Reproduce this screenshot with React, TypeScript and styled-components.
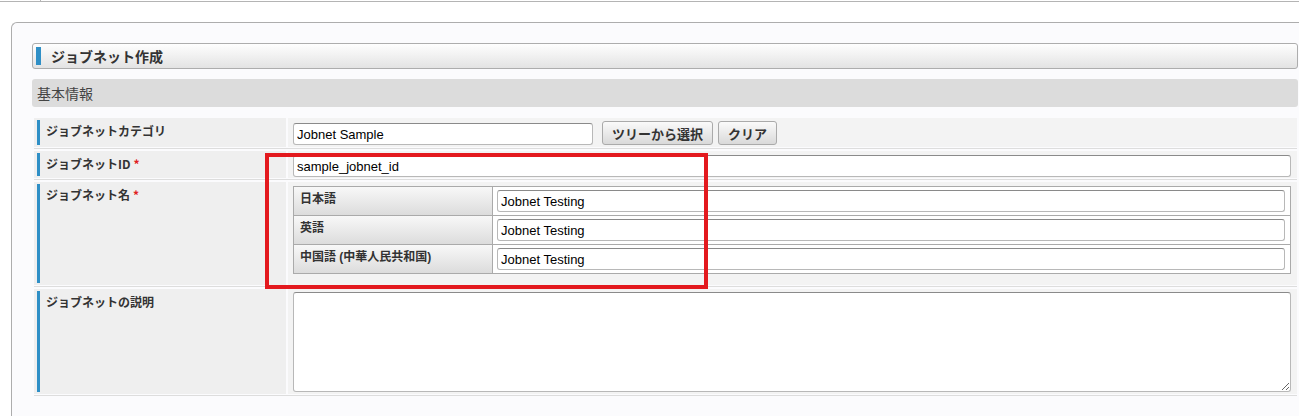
import React from "react";
import styled, { createGlobalStyle } from "styled-components";

const Global = createGlobalStyle`
  html, body { margin: 0; padding: 0; background: #ffffff; overflow: hidden; }
  body { font-family: "Liberation Sans", "Noto Sans CJK JP", sans-serif; color: #333; }
  * { box-sizing: border-box; }
`;

const Page = styled.div`
  position: relative;
  width: 1299px;
  height: 416px;
  overflow: hidden;
`;

const TopStrip = styled.div`
  height: 2px;
  border-bottom: 1px solid #b4b4b4;
`;

const TopTick = styled.div`
  margin-left: 40px;
  width: 1px;
  height: 1px;
  background: #b4b4b4;
`;

const Panel = styled.div`
  margin: 20px -30px 0 11px;
  border: 1px solid #adadad;
  border-right: none;
  border-bottom: none;
  border-radius: 6px 0 0 0;
  background: #fbfbfd;
  padding: 20px 30px 0 20px;
  height: 394px;
`;

const TitleBar = styled.div`
  display: flex;
  align-items: center;
  height: 26px;
  border: 1px solid #adadad;
  border-radius: 3px;
  background: linear-gradient(#fefefe, #e3e3e3);
  margin-right: 1px;
  &::before {
    content: "";
    display: block;
    width: 5px;
    height: 18px;
    margin-left: 3px;
    margin-right: 10px;
    background: #2f8fc6;
  }
`;

const TitleText = styled.span`
  font-family: "Noto Sans CJK JP", sans-serif;
  font-weight: 700;
  font-size: 14px;
  color: #333;
`;

const SectionHeader = styled.div`
  margin-top: 10px;
  margin-right: 1px;
  height: 28px;
  display: flex;
  align-items: center;
  padding-left: 5px;
  background: #dcdcdc;
  border-radius: 3px;
  font-family: "Noto Sans CJK JP", sans-serif;
  font-size: 14px;
  color: #444;
`;

const Form = styled.div`
  margin-top: 11px;
  margin-left: 2px;
  margin-right: 2px;
`;

const Row = styled.div`
  display: grid;
  grid-template-columns: 252px 1fr;
  column-gap: 2px;
  padding-bottom: 1px;
  border-bottom: 1px solid #dddddd;
  margin-bottom: 2px;
`;

const LabelCell = styled.div`
  background: #efefef;
  padding: 2px 0 2px 3px;
  display: flex;
`;

const LabelInner = styled.div`
  flex: 1;
  border-left: 3px solid #2f8fc6;
  padding: 4px 0 0 6px;
  font-family: "Noto Sans CJK JP", sans-serif;
  font-weight: 700;
  font-size: 12px;
  line-height: 14px;
  color: #333;
`;

const Required = styled.span`
  color: #e02020;
  margin-left: 3px;
`;

const ValueCell = styled.div<{ $pt: number; $pb: number }>`
  background: #f3f3f3;
  padding: ${(p) => p.$pt}px 6px ${(p) => p.$pb}px 5px;
  display: flex;
  align-items: flex-end;
  gap: 5px;
`;

const TextInput = styled.input<{ $w?: number }>`
  height: 22px;
  width: ${(p) => (p.$w ? `${p.$w}px` : "100%")};
  flex: ${(p) => (p.$w ? "none" : "1")};
  border: 1px solid #b8b8b8;
  border-top-color: #8a8a8a;
  border-radius: 3px;
  background: #fff;
  padding: 0 3px;
  font-family: "Liberation Sans", Arial, sans-serif;
  font-size: 13px;
  color: #000;
  outline: none;
`;

const Button = styled.button<{ $ml?: number }>`
  height: 24px;
  margin-left: ${(p) => p.$ml ?? 0}px;
  padding: 0 9px;
  border: 1px solid #aaaaaa;
  border-radius: 3px;
  background: linear-gradient(#fafafa, #d9d9d9);
  font-family: "Noto Sans CJK JP", sans-serif;
  font-weight: 700;
  font-size: 13px;
  color: #333;
`;

const SubTable = styled.div`
  flex: 1;
  border: 1px solid #aaaaaa;
  border-bottom: none;
  background: #fff;
`;

const SubRow = styled.div`
  display: grid;
  grid-template-columns: 199px 1fr;
  border-bottom: 1px solid #aaaaaa;
  height: 29px;
`;

const SubLabel = styled.div`
  border-right: 1px solid #aaaaaa;
  background: linear-gradient(#f8f8f8, #dcdcdc);
  padding: 5px 0 0 6px;
  font-family: "Liberation Sans", "Noto Sans CJK JP", sans-serif;
  font-weight: 700;
  font-size: 12px;
  line-height: 14px;
  color: #333;
`;

const SubValue = styled.div`
  padding: 3px 5px 0 4px;
  display: flex;
`;

const TextArea = styled.textarea`
  flex: 1;
  height: 100px;
  border: 1px solid #b8b8b8;
  border-top-color: #8a8a8a;
  border-radius: 3px;
  background: #fff;
  resize: both;
  outline: none;
`;

const Annotation = styled.div`
  position: absolute;
  left: 265px;
  top: 153px;
  width: 443px;
  height: 136px;
  border: 4px solid #e3191e;
  pointer-events: none;
`;

const languages = ["日本語", "英語", "中国語 (中華人民共和国)"];

export default function App() {
  return (
    <Page>
      <Global />
      <TopStrip>
        <TopTick />
      </TopStrip>
      <Panel>
        <TitleBar>
          <TitleText>ジョブネット作成</TitleText>
        </TitleBar>
        <SectionHeader>基本情報</SectionHeader>
        <Form>
          <Row>
            <LabelCell>
              <LabelInner>ジョブネットカテゴリ</LabelInner>
            </LabelCell>
            <ValueCell $pt={3} $pb={2}>
              <TextInput $w={300} defaultValue="Jobnet Sample" />
              <Button $ml={4}>ツリーから選択</Button>
              <Button>クリア</Button>
            </ValueCell>
          </Row>
          <Row>
            <LabelCell>
              <LabelInner>
                ジョブネットID<Required>*</Required>
              </LabelInner>
            </LabelCell>
            <ValueCell $pt={4} $pb={1}>
              <TextInput defaultValue="sample_jobnet_id" />
            </ValueCell>
          </Row>
          <Row>
            <LabelCell>
              <LabelInner>
                ジョブネット名<Required>*</Required>
              </LabelInner>
            </LabelCell>
            <ValueCell $pt={4} $pb={11}>
              <SubTable>
                {languages.map((lang) => (
                  <SubRow key={lang}>
                    <SubLabel>{lang}</SubLabel>
                    <SubValue>
                      <TextInput defaultValue="Jobnet Testing" />
                    </SubValue>
                  </SubRow>
                ))}
              </SubTable>
            </ValueCell>
          </Row>
          <Row>
            <LabelCell>
              <LabelInner>ジョブネットの説明</LabelInner>
            </LabelCell>
            <ValueCell $pt={3} $pb={2}>
              <TextArea />
            </ValueCell>
          </Row>
        </Form>
      </Panel>
      <Annotation />
    </Page>
  );
}
